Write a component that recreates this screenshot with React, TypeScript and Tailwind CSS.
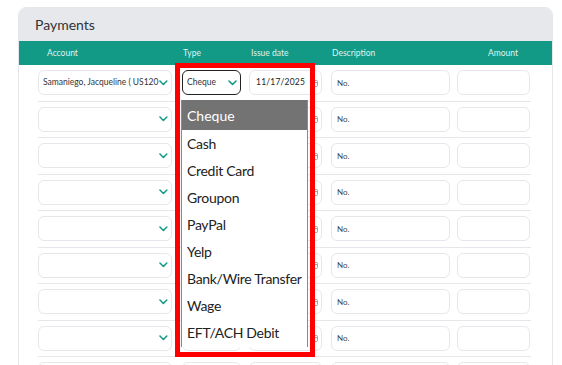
import React from 'react';

const types = [
  'Cheque',
  'Cash',
  'Credit Card',
  'Groupon',
  'PayPal',
  'Yelp',
  'Bank/Wire Transfer',
  'Wage',
  'EFT/ACH Debit',
];

const Chevron = () => (
  <svg width="9" height="6" viewBox="0 0 9 6" fill="none">
    <path d="M1 1l3.5 3.5L8 1" stroke="#149a86" strokeWidth="1.6" strokeLinecap="round" strokeLinejoin="round" />
  </svg>
);

const CalendarIcon = () => (
  <svg width="8" height="8" viewBox="0 0 8 8" fill="none">
    <rect x="0.5" y="1.5" width="7" height="6" rx="1" stroke="#9ca3af" strokeWidth="1" />
    <path d="M0.5 3.5h7" stroke="#9ca3af" strokeWidth="1" />
  </svg>
);

type RowProps = {
  first?: boolean;
};

const PaymentRow: React.FC<RowProps> = ({ first }) => (
  <div className="flex items-center h-[36.5px] border-b border-gray-200 w-[493px]">
    <div className="w-[134px] h-[25px] rounded-md border border-gray-200 flex items-center justify-between pl-[4px] pr-[3px]">
      <span className="text-[8.5px] text-[#333] whitespace-nowrap overflow-hidden w-[119px]">
        {first ? 'Samaniego, Jacqueline ( US120' : ''}
      </span>
      <Chevron />
    </div>
    <div
      className={
        first
          ? 'ml-[10px] w-[59px] h-[25px] rounded-md border-[1.5px] border-[#222] flex items-center justify-between pl-[4px] pr-[3px]'
          : 'ml-[10px] w-[59px] h-[25px] rounded-md border border-gray-200 flex items-center justify-between pl-[4px] pr-[3px]'
      }
    >
      <span className="text-[8.5px] text-[#333]">{first ? 'Cheque' : ''}</span>
      <Chevron />
    </div>
    <div className="ml-[8px] w-[73px] h-[25px] rounded-md border border-gray-200 flex items-center justify-between pl-[6px] pr-[3px]">
      <span className="text-[8.5px] text-[#222] tracking-[0.2px]">{first ? '11/17/2025' : ''}</span>
      <CalendarIcon />
    </div>
    <div className="ml-[9px] w-[119px] h-[25px] rounded-md border border-gray-200 flex items-center pl-[5px]">
      <span className="text-[8px] text-[#444]">No.</span>
    </div>
    <div className="ml-[7px] w-[73px] h-[25px] rounded-md border border-gray-200" />
  </div>
);

export default function App() {
  return (
    <div
      className="relative w-[562px] h-[365px] overflow-hidden bg-white pl-[18px] pt-[7px]"
      style={{ fontFamily: 'Lato, "Noto Sans", sans-serif' }}
    >
      <div className="w-[535px] h-[400px] border border-gray-200 rounded-t-[8px] overflow-hidden bg-white">
        <div className="h-[33px] bg-[#e7e8ec] flex items-center pl-[16px]">
          <span className="text-[14px] text-[#2f3237]">Payments</span>
        </div>
        <div className="h-[24px] bg-[#139a87] flex items-center pl-[19px] text-[8.5px] text-[#dff3ef]">
          <div className="w-[134px] pl-[9px]">Account</div>
          <div className="ml-[10px] w-[59px] pl-[1px]">Type</div>
          <div className="ml-[8px] w-[73px] pl-[2px]">Issue date</div>
          <div className="ml-[9px] w-[119px] pl-[1px]">Description</div>
          <div className="ml-[7px] w-[73px] pl-[31px]">Amount</div>
        </div>
        <div className="pl-[19px]">
          <PaymentRow first />
          {Array.from({ length: 8 }).map((_, i) => (
            <PaymentRow key={i} />
          ))}
        </div>
      </div>

      {/* open type dropdown */}
      <div className="absolute left-[181px] top-[100px] w-[127px] h-[247px] bg-white border-x border-[#8a8a8a]">
        {types.map((t, i) => (
          <div
            key={t}
            className={
              i === 0
                ? 'h-[30px] flex items-center pl-[5px] text-[14px] whitespace-nowrap bg-[#737373] text-white'
                : 'h-[27px] flex items-center pl-[5px] text-[14px] whitespace-nowrap tracking-[-0.3px] text-[#222]'
            }
          >
            {t}
          </div>
        ))}
      </div>

      {/* highlight box */}
      <div className="absolute left-[175px] top-[63px] w-[140px] h-[294px] border-[5px] border-[#ff0000]" />
    </div>
  );
}
